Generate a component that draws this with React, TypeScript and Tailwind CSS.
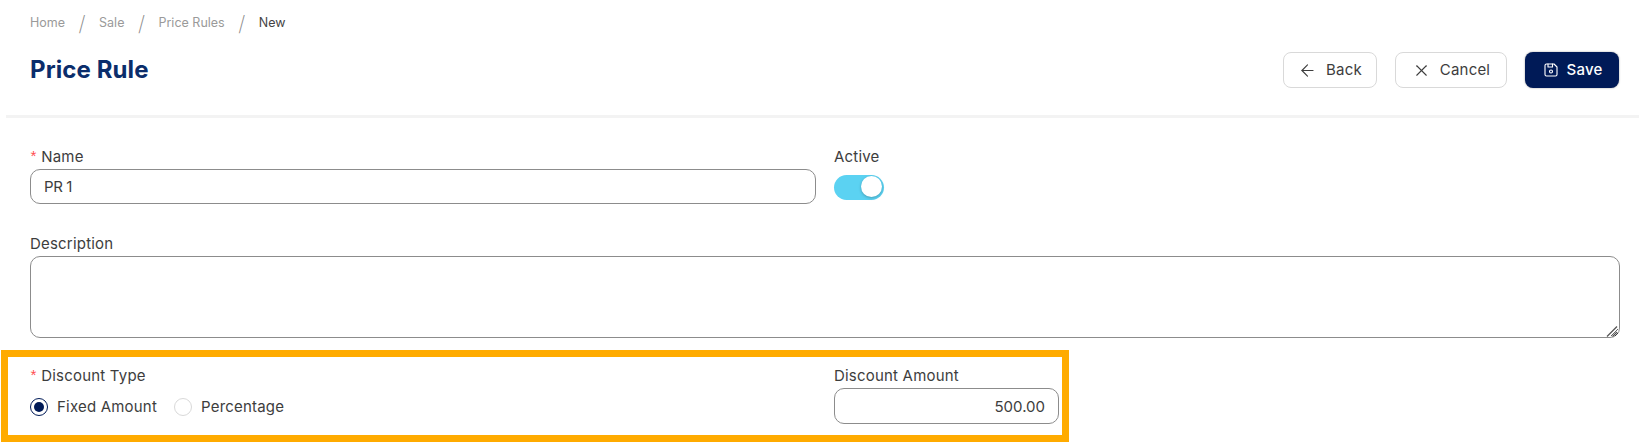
import React from 'react'
import { ArrowLeft, X } from 'lucide-react'
import { TbDeviceFloppy } from 'react-icons/tb'

const FONT = "font-['Inter','Noto_Sans',sans-serif]"

const Crumb = ({ label, current }: { label: string; current?: boolean }) => (
  <span className={current ? 'text-[#444444]' : 'text-[#9a9a9a]'}>{label}</span>
)

const Slash = () => <span className="text-[#8a8a8a] text-[21px] font-extralight leading-none px-[13.5px]">/</span>

const Required = () => (
  <span className="font-['Liberation_Mono',monospace] text-[#ff4d4f] mr-[3px] -ml-[1px] text-[15px] mt-[5px]">*</span>
)

export default function App() {
  return (
    <div className={`${FONT} w-full h-[448px] bg-white text-[#3d3d3d] text-[15px] tracking-[0.2px] overflow-hidden`}>
      {/* Header */}
      <div className="ml-[6px] h-[118px] border-b-[3px] border-[#f3f3f3] pl-[24px] pr-[20px]">
        <nav className="flex items-center h-[46px] text-[12.5px] tracking-normal">
          <Crumb label="Home" />
          <Slash />
          <Crumb label="Sale" />
          <Slash />
          <Crumb label="Price Rules" />
          <Slash />
          <Crumb label="New" current />
        </nav>
        <div className="flex items-center justify-between mt-[6px]">
          <h1 className="text-[24px] font-bold text-[#0b2d6b] leading-[36px] tracking-[0.1px]">Price Rule</h1>
          <div className="flex items-center gap-[18px]">
            <button type="button" className="w-[94px] h-[36px] flex items-center justify-center gap-[9px] rounded-[8px] border border-[#d9d9d9] bg-white">
              <ArrowLeft size={19} strokeWidth={1.4} />
              Back
            </button>
            <button type="button" className="w-[112px] h-[36px] flex items-center justify-center gap-[9px] rounded-[8px] border border-[#d9d9d9] bg-white">
              <X size={19} strokeWidth={1.4} />
              Cancel
            </button>
            <button type="button" className="w-[94px] h-[36px] flex items-center justify-center gap-[7px] rounded-[8px] bg-[#001a57] text-white font-medium shadow-[0_0_2px_rgba(0,0,0,0.4)]">
              <TbDeviceFloppy size={18} strokeWidth={1.5} />
              Save
            </button>
          </div>
        </div>
      </div>

      {/* Form */}
      <div className="pl-[30px] pr-[19px] pt-[27px]">
        <div className="flex gap-[18px]">
          <div className="w-[786px]">
            <label className="flex items-center h-[24px]"><Required />Name</label>
            <input defaultValue="PR 1" className="block w-full h-[35px] px-[13px] rounded-[10px] border border-[#8c8c8c] outline-none tracking-[-0.4px]" />
          </div>
          <div>
            <label className="flex items-center h-[24px]">Active</label>
            <div className="mt-[6px] w-[50px] h-[25px] rounded-full bg-[#5bd2f2] relative">
              <span className="absolute right-[2px] top-[1px] w-[21px] h-[21px] rounded-full bg-white shadow-[0_1px_3px_rgba(0,0,0,0.25)]" />
            </div>
          </div>
        </div>

        <div className="mt-[28px] relative">
          <label className="flex items-center h-[24px]">Description</label>
          <textarea className="block w-full h-[82px] rounded-[10px] border border-[#8c8c8c] outline-none" />
          <svg className="absolute right-[2px] bottom-[1px] pointer-events-none" width="12" height="12" viewBox="0 0 12 12" fill="none" stroke="#555555" strokeWidth="1.3">
            <path d="M1 11.5 L11 1.5" />
            <path d="M6.5 11.5 L11 7" />
          </svg>
        </div>
      </div>

      {/* Highlighted row */}
      <div className="ml-[1px] mt-[12px] w-[1068px] h-[92px] border-[7px] border-[#ffab00] flex gap-[18px] pl-[22px] pt-[7px]">
        <div className="w-[786px]">
          <label className="flex items-center h-[24px]"><Required />Discount Type</label>
          <div className="flex items-center h-[18px] mt-[10px]">
            <span className="w-[18px] h-[18px] rounded-full border-[1.5px] border-[#001a57] flex items-center justify-center mr-[9px]">
              <span className="w-[10px] h-[10px] rounded-full bg-[#001a57]" />
            </span>
            <span>Fixed Amount</span>
            <span className="w-[18px] h-[18px] rounded-full border border-[#d9d9d9] ml-[17px] mr-[9px]" />
            <span>Percentage</span>
          </div>
        </div>
        <div>
          <label className="flex items-center h-[24px]">Discount Amount</label>
          <input defaultValue="500.00" className="block w-[225px] h-[36px] px-[13px] text-right rounded-[10px] border border-[#8c8c8c] outline-none tracking-normal" />
        </div>
      </div>
    </div>
  )
}
